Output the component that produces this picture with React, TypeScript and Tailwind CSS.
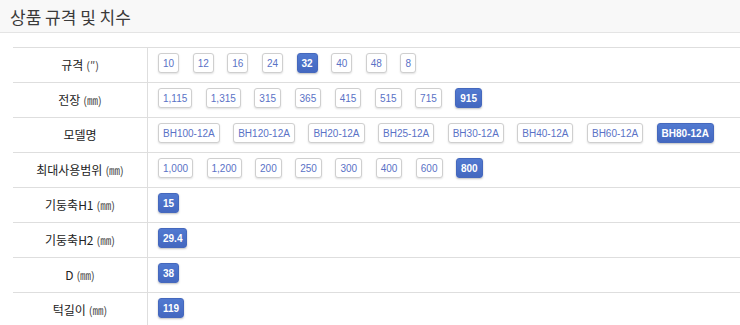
import React from 'react'

type Row = {
  label: string
  unit?: string
  values: string[]
  active: string
}

const rows: Row[] = [
  { label: '규격', unit: '(″)', values: ['10', '12', '16', '24', '32', '40', '48', '8'], active: '32' },
  { label: '전장', unit: '(㎜)', values: ['1,115', '1,315', '315', '365', '415', '515', '715', '915'], active: '915' },
  {
    label: '모델명',
    values: ['BH100-12A', 'BH120-12A', 'BH20-12A', 'BH25-12A', 'BH30-12A', 'BH40-12A', 'BH60-12A', 'BH80-12A'],
    active: 'BH80-12A',
  },
  { label: '최대사용범위', unit: '(㎜)', values: ['1,000', '1,200', '200', '250', '300', '400', '600', '800'], active: '800' },
  { label: '기둥축H1', unit: '(㎜)', values: ['15'], active: '15' },
  { label: '기둥축H2', unit: '(㎜)', values: ['29.4'], active: '29.4' },
  { label: 'D', unit: '(㎜)', values: ['38'], active: '38' },
  { label: '턱길이', unit: '(㎜)', values: ['119'], active: '119' },
]

function Option({ value, active }: { value: string; active: boolean }) {
  return (
    <span
      className={
        active
          ? 'h-[20px] px-[4px] flex items-center rounded-[3px] border border-[#4568bd] bg-gradient-to-b from-[#5179d0] to-[#4468c0] text-white font-bold text-[10px] shadow-[0_1px_2px_rgba(0,0,0,0.25)]'
          : 'h-[20px] px-[4px] flex items-center rounded-[3px] border border-[#cfcfcf] bg-white text-[#5a72c6] text-[10px] shadow-[0_1px_2px_rgba(0,0,0,0.12)]'
      }
    >
      {value}
    </span>
  )
}

export default function App() {
  return (
    <div className="w-[740px] h-[325px] overflow-hidden bg-white font-['Liberation_Sans','Noto_Sans_CJK_KR',sans-serif]">
      <div className="h-[33px] bg-[#f8f8f8] border-b border-[#e4e4e4] px-[10px] flex items-center">
        <h2 className="text-[17px] text-[#3a3a3a] font-['Noto_Sans_CJK_KR',sans-serif] leading-none">상품 규격 및 치수</h2>
      </div>

      <div className="ml-[13px] mt-[14px]">
        {rows.map((row) => (
          <div key={row.label} className="flex border-t border-[#dedede] h-[35px]">
            <div className="w-[135px] shrink-0 border-r border-[#dedede] flex items-center justify-center gap-[3px] text-[12px] text-[#222] font-['Noto_Sans_CJK_KR',sans-serif]">
              <span>{row.label}</span>
              {row.unit && <span className="text-[11px] text-[#444]">{row.unit}</span>}
            </div>
            <div className="flex items-start pt-[5px] pl-[10px] gap-[13.5px]">
              {row.values.map((v) => (
                <Option key={v} value={v} active={v === row.active} />
              ))}
            </div>
          </div>
        ))}
      </div>
    </div>
  )
}
